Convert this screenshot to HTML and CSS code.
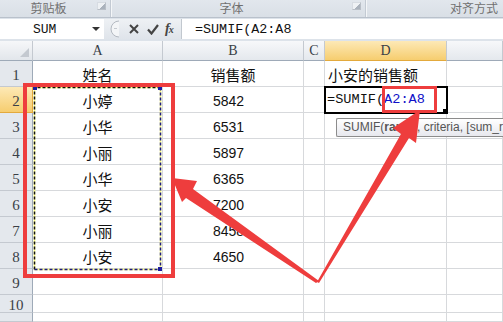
FILE: index.html
```html
<!DOCTYPE html>
<html lang="zh-CN">

<head>
    <meta charset="UTF-8" />
    <meta name="viewport" content="width=device-width, initial-scale=1.0" />
    <title>SUMIF</title>

    <link rel="stylesheet" href="styles.css">

</head>

<body>
    <div class="ribbon">
        <div class="group group-clip"><span class="group-label">剪贴板</span><span class="launcher"></span></div>
        <div class="group group-font"><span class="group-label">字体</span><span class="launcher"></span></div>
        <div class="group group-align"><span class="group-label">对齐方式</span></div>
    </div>

    <div class="formula-bar">
        <div class="name-box">SUM<span class="drop"></span></div>
        <div class="fx-tools">
            <svg class="grip" width="13" height="18" viewBox="0 0 13 18">
                <path d="M12 1 A8 8 0 0 0 12 17" fill="#f3f5f7" stroke="#b3b9c1" />
                <path d="M7 8.5 H10" stroke="#c4c9cf" />
            </svg>
            <svg class="btn-cancel" width="10" height="10" viewBox="0 0 10 10">
                <path d="M1 1 L9 9 M9 1 L1 9" stroke="#444" stroke-width="2" />
            </svg>
            <svg class="btn-enter" width="12" height="11" viewBox="0 0 12 11">
                <path d="M1 5.5 L4.5 9.5 L11 1" stroke="#444" stroke-width="2.2" fill="none" />
            </svg>
            <span class="fx">f<small>x</small></span>
        </div>
        <div class="formula-input">=SUMIF(A2:A8</div>
    </div>

    <div class="sheet">
        <!-- header row -->
        <div class="corner">
            <svg width="11" height="11" viewBox="0 0 11 11"><path d="M10 1 V10 H1 Z" fill="#c4c9d0" /></svg>
        </div>
        <div class="col-head">A</div>
        <div class="col-head">B</div>
        <div class="col-head">C</div>
        <div class="col-head selected">D</div>
        <div class="col-head"></div>

        <!-- 1 -->
        <div class="row-head">1</div>
        <div class="cell name">姓名</div>
        <div class="cell name">销售额</div>
        <div class="cell"></div>
        <div class="cell name left">小安的销售额</div>
        <div class="cell"></div>

        <!-- 2 -->
        <div class="row-head selected">2</div>
        <div class="cell name">小婷</div>
        <div class="cell num">5842</div>
        <div class="cell"></div>
        <div class="cell active">=SUMIF(<span class="ref">A2:A8</span></div>
        <div class="cell"></div>

        <!-- 3 -->
        <div class="row-head">3</div>
        <div class="cell name">小华</div>
        <div class="cell num">6531</div>
        <div class="cell"></div>
        <div class="cell"></div>
        <div class="cell"></div>

        <!-- 4 -->
        <div class="row-head">4</div>
        <div class="cell name">小丽</div>
        <div class="cell num">5897</div>
        <div class="cell"></div>
        <div class="cell"></div>
        <div class="cell"></div>

        <!-- 5 -->
        <div class="row-head">5</div>
        <div class="cell name">小华</div>
        <div class="cell num">6365</div>
        <div class="cell"></div>
        <div class="cell"></div>
        <div class="cell"></div>

        <!-- 6 -->
        <div class="row-head">6</div>
        <div class="cell name">小安</div>
        <div class="cell num">7200</div>
        <div class="cell"></div>
        <div class="cell"></div>
        <div class="cell"></div>

        <!-- 7 -->
        <div class="row-head">7</div>
        <div class="cell name">小丽</div>
        <div class="cell num">8458</div>
        <div class="cell"></div>
        <div class="cell"></div>
        <div class="cell"></div>

        <!-- 8 -->
        <div class="row-head">8</div>
        <div class="cell name">小安</div>
        <div class="cell num">4650</div>
        <div class="cell"></div>
        <div class="cell"></div>
        <div class="cell"></div>

        <!-- 9 -->
        <div class="row-head">9</div>
        <div class="cell"></div>
        <div class="cell"></div>
        <div class="cell"></div>
        <div class="cell"></div>
        <div class="cell"></div>

        <!-- 10 -->
        <div class="row-head">10</div>
        <div class="cell"></div>
        <div class="cell"></div>
        <div class="cell"></div>
        <div class="cell"></div>
        <div class="cell"></div>

        <!-- 11 (only its top shows) -->
        <div class="row-head"></div>
        <div class="cell"></div>
        <div class="cell"></div>
        <div class="cell"></div>
        <div class="cell"></div>
        <div class="cell"></div>
    </div>

    <div class="tooltip">SUMIF(<b>range</b>, criteria, [sum_range])</div>

    <!-- copy marquee and red annotations drawn over the sheet -->
    <svg class="marks" width="503" height="322" viewBox="0 0 503 322">
        <rect x="34.5" y="87.5" width="126" height="182" fill="none" stroke="#ffff80" stroke-width="1.5" />
        <path d="M34.5 269.5 V87.5 H160.5" fill="none" stroke="#111" stroke-width="1.5" stroke-dasharray="3 2" />
        <path d="M160.5 87.5 V269.5 H34.5" fill="none" stroke="#1c1c80" stroke-width="1.5" stroke-dasharray="3 2" />
        <rect x="33" y="86" width="4" height="4" fill="#1c1ca0" />
        <rect x="158" y="86" width="4" height="4" fill="#1c1ca0" />
        <rect x="158" y="267" width="4" height="4" fill="#1c1ca0" />

        <rect x="25" y="85" width="148" height="191" fill="none" stroke="#ee3d3d" stroke-width="4" />
        <rect x="383.5" y="87.5" width="52" height="24" fill="none" stroke="#ee3d3d" stroke-width="3" />

        <polygon points="172,178 197,181 193,189 319,281 316,283 186,198 182,202" fill="#ee3d3d" />
        <polygon points="420,110 416,143 409,138 319,283 317,282 401,134 393,128" fill="#ee3d3d" />
    </svg>
</body>

</html>
```

FILE: styles.css
```css
html,
body {
    margin: 0;
    padding: 0;
}

body {
    position: relative;
    width: 503px;
    height: 322px;
    overflow: hidden;
    display: flex;
    flex-direction: column;
    background: #fff;
    font-family: "Noto Sans CJK SC", sans-serif;
}

/* ribbon (only the group captions are visible) */
.ribbon {
    display: flex;
    height: 17px;
    flex-shrink: 0;
    overflow: hidden;
    background: linear-gradient(#e2e7ed, #d9dfe6);
    border-bottom: 1px solid #b9c1cb;
}

.group {
    display: flex;
    align-items: flex-start;
    box-sizing: border-box;
    border-right: 1px solid #c3cad3;
    box-shadow: 1px 0 0 #f4f6f8;
    flex-shrink: 0;
}

.group-clip {
    width: 111px;
}

.group-font {
    width: 255px;
}

.group-align {
    flex: 1;
    justify-content: flex-end;
    border-right: none;
}

.group-label {
    flex: 1;
    text-align: center;
    font-size: 12px;
    line-height: 15px;
    color: #707070;
}

.group-align .group-label {
    flex: none;
    padding-right: 5px;
}

.launcher {
    width: 7px;
    height: 6px;
    margin: 2px 4px 0 0;
    border: 1px solid #b8bec6;
    border-top-color: #d7dce2;
    border-left-color: #d7dce2;
    background: linear-gradient(135deg, #eef1f4 55%, #aab2bc 56%);
}

/* formula bar */
.formula-bar {
    display: flex;
    height: 23px;
    flex-shrink: 0;
    box-sizing: border-box;
    padding: 1px 0 2px;
    background: #dde3ea;
}

.name-box {
    display: flex;
    align-items: center;
    justify-content: space-between;
    width: 104px;
    box-sizing: border-box;
    padding: 0 4px 0 33px;
    background: #fff;
    font-family: "Liberation Mono", monospace;
    font-size: 13px;
    color: #111;
}

.drop {
    width: 0;
    height: 0;
    border-left: 4px solid transparent;
    border-right: 4px solid transparent;
    border-top: 4px solid #333;
}

.fx-tools {
    display: flex;
    align-items: center;
    width: 77px;
    box-sizing: border-box;
    padding-left: 3px;
    background: linear-gradient(#eef1f4, #dfe4ea);
}

.btn-cancel {
    margin-left: 9px;
}

.btn-enter {
    margin-left: 8px;
}

.fx {
    margin-left: 6px;
    font-family: "Liberation Serif", serif;
    font-style: italic;
    font-weight: bold;
    font-size: 14px;
    color: #444;
    letter-spacing: -1px;
}

.fx small {
    font-size: 10px;
}

.formula-input {
    flex: 1;
    display: flex;
    align-items: center;
    padding-left: 13px;
    background: #fff;
    border-left: 1px solid #c2c8cf;
    font-family: "Liberation Mono", monospace;
    font-size: 13.4px;
    color: #111;
}

/* worksheet */
.sheet {
    display: grid;
    grid-template-columns: 33px 130px 141px 21px 122px 1fr;
    grid-template-rows: 20px repeat(9, 26px) 18px 9px;
    flex-shrink: 0;
}

.sheet > div {
    display: flex;
    align-items: center;
    box-sizing: border-box;
    min-width: 0;
    overflow: hidden;
    white-space: nowrap;
    border-right: 1px solid #d7d9dc;
    border-bottom: 1px solid #d7d9dc;
}

.corner {
    justify-content: flex-end;
    align-items: flex-end !important;
    padding: 0 2px 2px 0;
    background: linear-gradient(#f6f7f9, #e2e6eb);
    border-color: #c4c9d0 !important;
    border-bottom-color: #9eaab8 !important;
}

.col-head {
    justify-content: center;
    background: linear-gradient(#f7f8fa, #e4e8ed);
    border-color: #c4c9d0 !important;
    border-bottom-color: #9eaab8 !important;
    font-family: "Liberation Serif", serif;
    font-size: 14px;
    color: #3a3f47;
}

.row-head {
    justify-content: center;
    background: #e4e8ed;
    border-color: #c4c9d0 !important;
    border-right-color: #9eaab8 !important;
    font-family: "Liberation Serif", serif;
    font-size: 15px;
    color: #3a3f47;
    padding-top: 3px;
}

.col-head.selected,
.row-head.selected {
    background: linear-gradient(#fde9b6, #f6cd6f);
    border-bottom-color: #e3a93c !important;
}

.row-head.selected {
    border-right-color: #e3a93c !important;
}

.cell.name {
    justify-content: center;
    font-size: 15px;
    color: #111;
    padding-top: 2px;
}

.cell.left {
    justify-content: flex-start;
    padding-left: 3px;
}

.cell.num {
    justify-content: center;
    padding: 2px 9px 0 0;
    font-family: "Liberation Sans", sans-serif;
    font-size: 14px;
    color: #111;
}

.cell.active {
    position: relative;
    padding-left: 2px;
    outline: 2px solid #000;
    outline-offset: -1px;
    font-family: "Liberation Mono", monospace;
    font-size: 13.6px;
    color: #111;
}

.cell.active::after {
    content: "";
    position: absolute;
    right: -3px;
    bottom: -3px;
    width: 5px;
    height: 5px;
    background: #000;
    border: 1px solid #fff;
}

.ref {
    color: #1010c8;
}

/* function hint */
.tooltip {
    position: absolute;
    left: 336px;
    top: 118px;
    width: 168px;
    height: 19px;
    box-sizing: border-box;
    padding-left: 6px;
    overflow: hidden;
    border: 1px solid #8c8c8c;
    border-right: none;
    border-radius: 2px 0 0 2px;
    background: linear-gradient(#ffffff, #e7e8ee);
    font-family: "Liberation Sans", sans-serif;
    font-size: 12px;
    line-height: 17px;
    color: #555;
    white-space: nowrap;
}

.marks {
    position: absolute;
    left: 0;
    top: 0;
    pointer-events: none;
}
```
